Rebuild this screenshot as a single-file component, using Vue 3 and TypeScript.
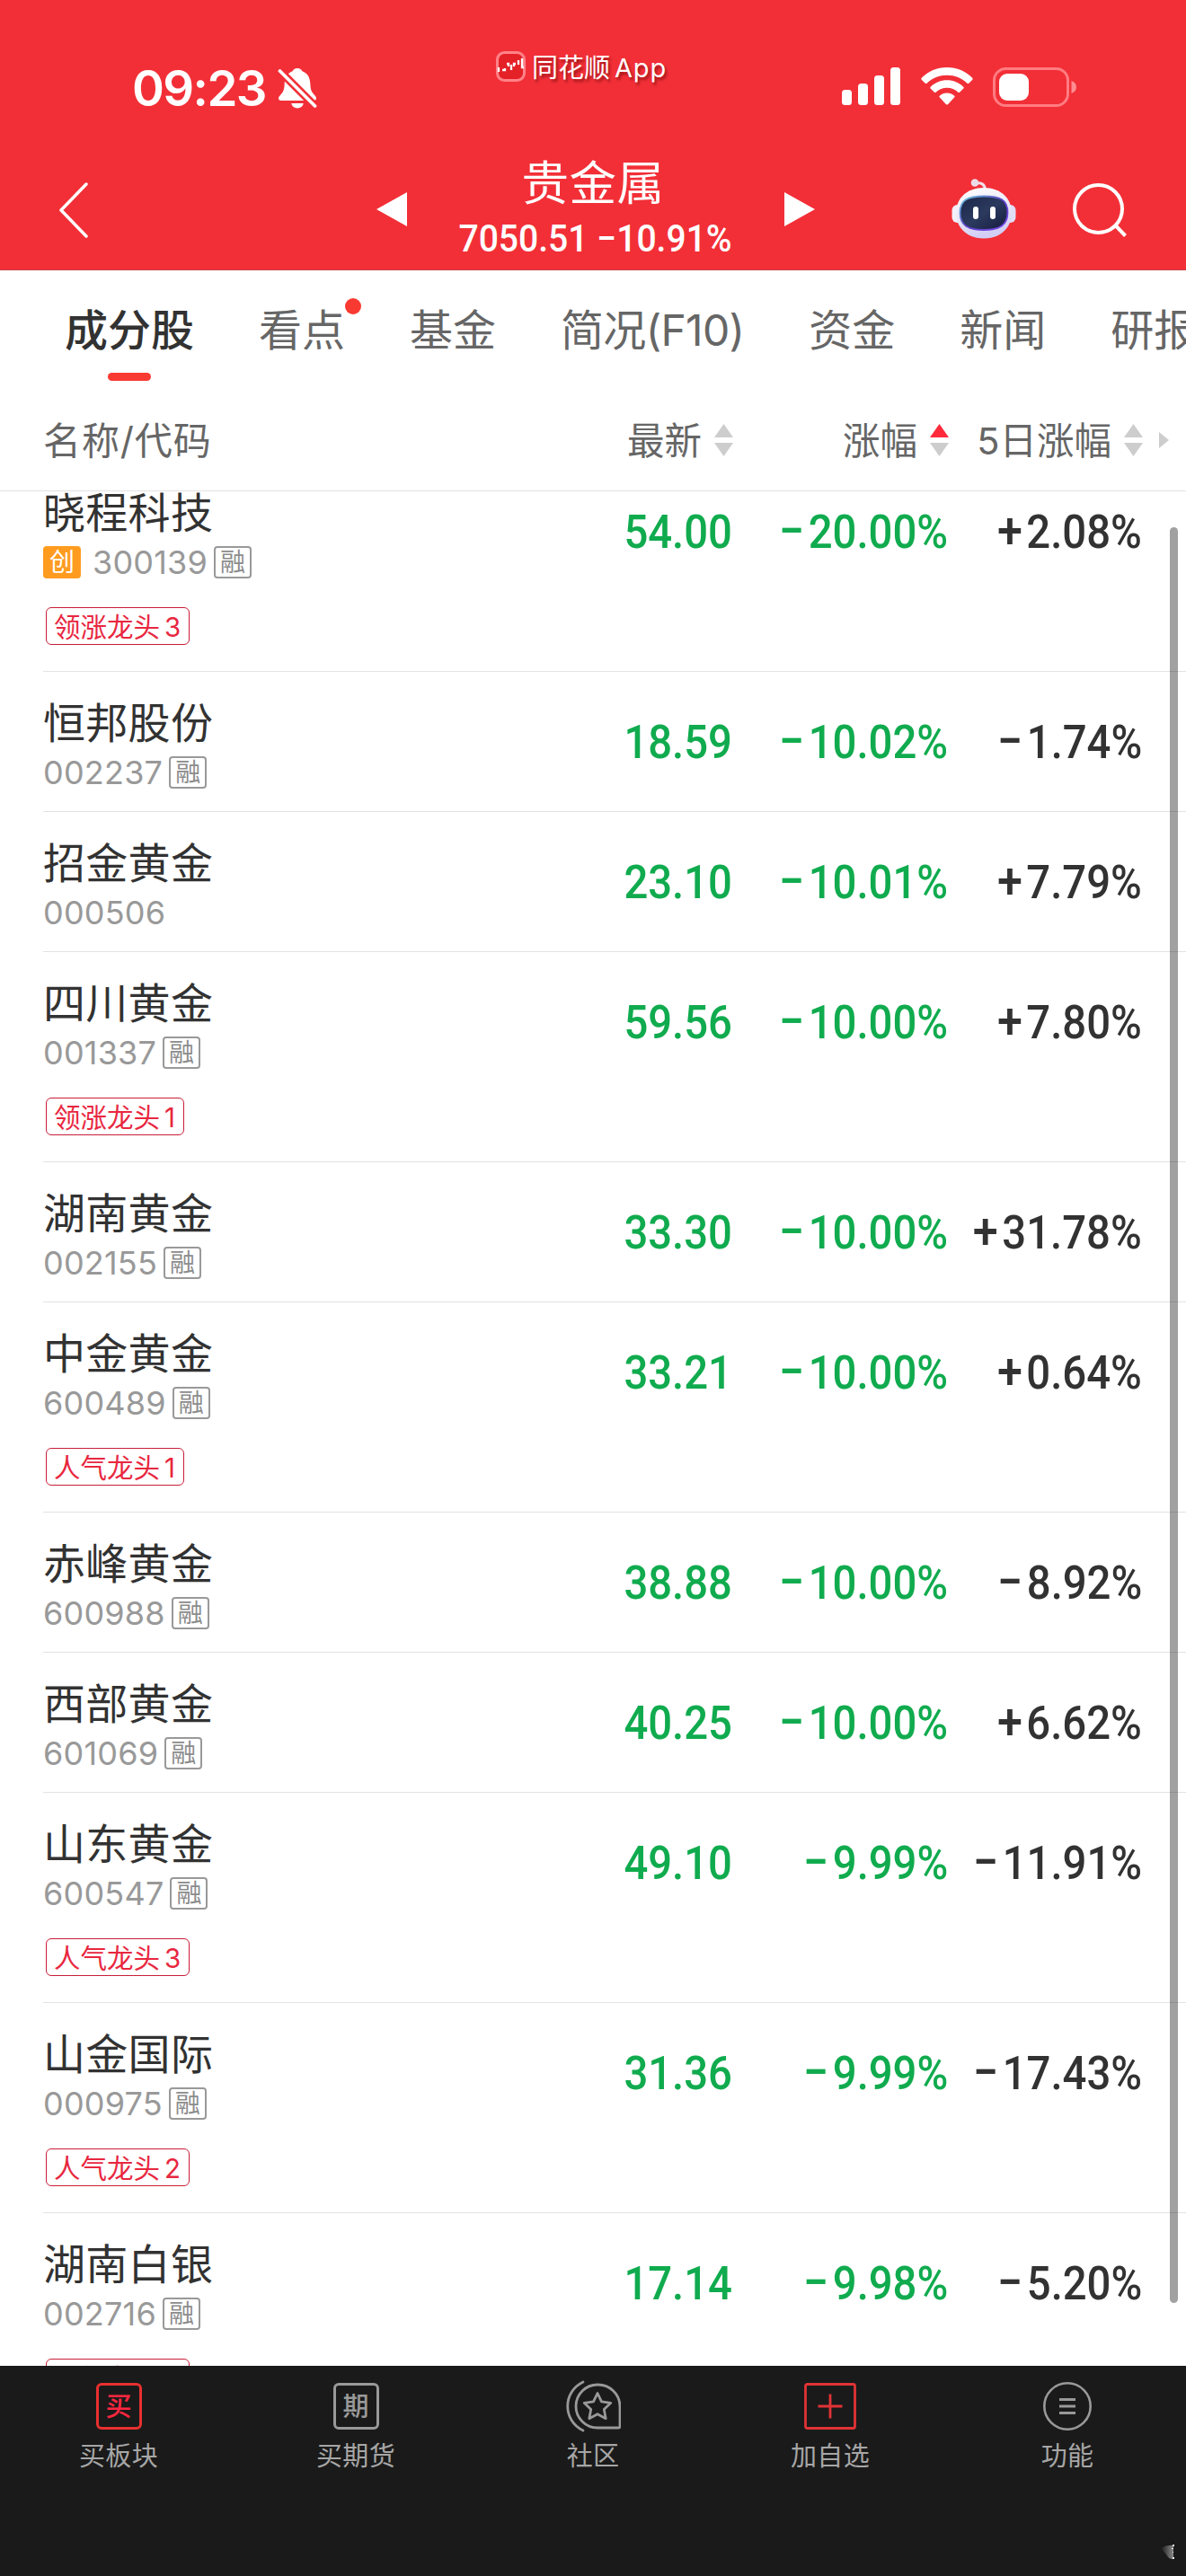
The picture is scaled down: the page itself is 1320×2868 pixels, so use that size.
<script setup lang="ts">
interface Tab {
  label: string
  active?: boolean
  dot?: boolean
  tight?: boolean
}

interface Stock {
  name: string
  code: string
  price: string
  change: string
  fiveDay: string
  margin: boolean
  growth?: boolean
  tag?: string
  rank?: number
}

const tabs: Tab[] = [
  { label: '成分股', active: true },
  { label: '看点', dot: true },
  { label: '基金' },
  { label: '简况(F10)', tight: true },
  { label: '资金' },
  { label: '新闻' },
  { label: '研报' },
]

const columns = [
  { key: 'price', label: '最新', sorted: false },
  { key: 'change', label: '涨幅', sorted: true },
  { key: 'five', label: '5日涨幅', sorted: false },
]

const stocks: Stock[] = [
  { name: '晓程科技', code: '300139', price: '54.00', change: '−20.00%', fiveDay: '+2.08%', margin: true, growth: true, tag: '领涨龙头', rank: 3 },
  { name: '恒邦股份', code: '002237', price: '18.59', change: '−10.02%', fiveDay: '−1.74%', margin: true },
  { name: '招金黄金', code: '000506', price: '23.10', change: '−10.01%', fiveDay: '+7.79%', margin: false },
  { name: '四川黄金', code: '001337', price: '59.56', change: '−10.00%', fiveDay: '+7.80%', margin: true, tag: '领涨龙头', rank: 1 },
  { name: '湖南黄金', code: '002155', price: '33.30', change: '−10.00%', fiveDay: '+31.78%', margin: true },
  { name: '中金黄金', code: '600489', price: '33.21', change: '−10.00%', fiveDay: '+0.64%', margin: true, tag: '人气龙头', rank: 1 },
  { name: '赤峰黄金', code: '600988', price: '38.88', change: '−10.00%', fiveDay: '−8.92%', margin: true },
  { name: '西部黄金', code: '601069', price: '40.25', change: '−10.00%', fiveDay: '+6.62%', margin: true },
  { name: '山东黄金', code: '600547', price: '49.10', change: '−9.99%', fiveDay: '−11.91%', margin: true, tag: '人气龙头', rank: 3 },
  { name: '山金国际', code: '000975', price: '31.36', change: '−9.99%', fiveDay: '−17.43%', margin: true, tag: '人气龙头', rank: 2 },
  { name: '湖南白银', code: '002716', price: '17.14', change: '−9.98%', fiveDay: '−5.20%', margin: true, tag: '人气龙头', rank: 3 },
]

const actions = [
  { icon: 'buy', label: '买板块' },
  { icon: 'futures', label: '买期货' },
  { icon: 'community', label: '社区' },
  { icon: 'add', label: '加自选' },
  { icon: 'menu', label: '功能' },
]
</script>

<template>
  <div class="page">
    <header class="top">
      <div class="status">
        <div class="status-left">
          <span class="time">09:23</span>
          <svg class="bell" width="44" height="46" viewBox="0 0 44 46">
            <path fill="#fff" d="M22 1c3 0 4.600 1.600 5.400 3.300C33.500 6.500 36 11.500 36.300 18c.3 7.500 1.700 9.600 4.400 12.400 2.300 2.400 2.300 3.600 2.300 4.200 0 1.600-1.200 2.400-3 2.400H4c-1.900 0-3-.9-3-2.500 0-1.300.6-2.300 2.400-4.100 2.700-2.800 4-5 4.300-12.400C8 11.500 10.500 6.500 16.600 4.300 17.400 2.600 19 1 22 1z" />
            <path fill="#fff" d="M15.300 40h13.400c-.5 3.300-3.300 5.400-6.700 5.400s-6.200-2.100-6.700-5.400z" />
            <path stroke="#f22f37" stroke-width="9" d="M0 1.500L44 45.500" />
            <path stroke="#fff" stroke-width="3.800" stroke-linecap="round" d="M2.500 4L41.500 43" />
          </svg>
        </div>
        <div class="app-label">
          <svg width="33" height="34" viewBox="0 0 33 34">
            <rect x="1.500" y="1.500" width="30" height="31" rx="8" fill="#e52128" stroke="#ff8288" stroke-width="3" />
            <path fill="none" stroke="#fff" stroke-width="2.300" d="M3 18v5M7 21h3v-2M12 14h2v3M17 15v6M22 14h-2v3M25 10v5M29 8v10h2" />
          </svg>
          <span>同花顺<span class="latin">App</span></span>
        </div>
        <div class="status-right">
          <svg width="66" height="42" viewBox="0 0 66 42" fill="#fff">
            <rect x="0" y="25" width="11" height="17" rx="3.500" />
            <rect x="18" y="18" width="11" height="24" rx="3.500" />
            <rect x="36" y="9" width="11" height="33" rx="3.500" />
            <rect x="54" y="0" width="11" height="42" rx="3.500" />
          </svg>
          <svg width="58" height="42" viewBox="0 0 58 42" fill="#fff">
            <path d="M29 0C40 0 50 4.300 57 11.500c.9.9.9 1.600.1 2.400l-3.600 3.600c-.8.8-1.500.8-2.300 0C45.300 12 37.700 8.700 29 8.700S12.700 12 6.800 17.500c-.8.8-1.500.8-2.300 0L.9 13.900c-.8-.8-.8-1.500.1-2.400C8 4.300 18 0 29 0z" />
            <path d="M29 14.300c7 0 13.400 2.700 18 7.100.9.8.9 1.600.1 2.400l-3.800 3.700c-.8.8-1.400.7-2.200 0-3.200-2.900-7.400-4.700-12.100-4.700s-8.900 1.800-12.100 4.700c-.8.700-1.400.8-2.200 0l-3.800-3.700c-.8-.8-.8-1.600.1-2.400 4.600-4.400 11-7.100 18-7.100z" />
            <path d="M29 28.500c3.100 0 5.900 1.100 8 3 .8.700.8 1.400.1 2.100l-6.900 7.300c-.8.900-1.600.9-2.400 0l-6.900-7.300c-.7-.7-.7-1.400.1-2.100 2.100-1.900 4.900-3 8-3z" />
          </svg>
          <svg width="94" height="44" viewBox="0 0 94 44">
            <rect x="1.500" y="1.500" width="82" height="41" rx="13" fill="none" stroke="#ff7d82" stroke-width="3" />
            <path fill="#ff8d91" d="M87.500 15c3.500 1.200 5.500 4 5.500 7s-2 5.800-5.500 7z" />
            <rect x="7" y="7" width="33" height="30" rx="9" fill="#fff" />
          </svg>
        </div>
      </div>

      <div class="nav">
        <svg class="back" width="34" height="62" viewBox="0 0 34 62">
          <path fill="none" stroke="#fff" stroke-width="3.500" stroke-linecap="round" stroke-linejoin="round" d="M31 2L3 31l28 29" />
        </svg>
        <div class="switcher">
          <svg width="34" height="38" viewBox="0 0 34 38"><path fill="#fff" d="M34 0v38L0 19z" /></svg>
          <div class="heading">
            <h1>贵金属</h1>
            <p><span class="din">7050.51 −10.91%</span></p>
          </div>
          <svg width="34" height="38" viewBox="0 0 34 38"><path fill="#fff" d="M0 0v38l34-19z" /></svg>
        </div>
        <div class="nav-tools">
          <svg class="robot" width="72" height="67" viewBox="0 0 72 67">
            <defs>
              <linearGradient id="shell" x1="0" y1="0" x2="0.300" y2="1">
                <stop offset="0" stop-color="#fff" />
                <stop offset="0.600" stop-color="#e9e6f6" />
                <stop offset="1" stop-color="#d2cef5" />
              </linearGradient>
              <linearGradient id="rim" x1="0" y1="0" x2="1" y2="1">
                <stop offset="0" stop-color="#6fd0dc" />
                <stop offset="0.500" stop-color="#5b3fc4" />
                <stop offset="1" stop-color="#7b4bea" />
              </linearGradient>
              <linearGradient id="visor" x1="0" y1="0" x2="1" y2="1">
                <stop offset="0" stop-color="#1c2648" />
                <stop offset="0.500" stop-color="#2b3a5e" />
                <stop offset="1" stop-color="#151b3e" />
              </linearGradient>
            </defs>
            <path fill="none" stroke="#f1dfe9" stroke-width="3" d="M27 5c6-1 10 1 10.500 7" />
            <circle cx="26" cy="4.500" r="4.300" fill="#ecdce8" />
            <rect x="0.500" y="29" width="12" height="20" rx="6" fill="#f3effb" />
            <rect x="59.500" y="29" width="12" height="20" rx="6" fill="#e2ddf7" />
            <path fill="url(#shell)" d="M36 10c19 0 31 12 31 28S55 66.500 36 66.500 5 54 5 38s12-28 31-28z" />
            <path fill="url(#visor)" stroke="url(#rim)" stroke-width="1.800" d="M36 19.500c18 0 26.500 4 26.500 18S54 57 36 57 9.500 51.500 9.500 37.500s8.500-18 26.500-18z" />
            <rect x="24" y="31" width="6" height="14" rx="3" fill="#fff" />
            <rect x="43" y="31" width="6" height="14" rx="3" fill="#fff" />
          </svg>
          <svg class="search" width="60" height="60" viewBox="0 0 60 60">
            <circle cx="28.500" cy="28.500" r="26.500" fill="none" stroke="#fff" stroke-width="4" />
            <path stroke="#fff" stroke-width="4" d="M47.500 47l11 11.500" />
          </svg>
        </div>
      </div>
    </header>

    <nav class="tabs">
      <div v-for="tab in tabs" :key="tab.label" class="tab" :class="{ active: tab.active, tight: tab.tight }">
        {{ tab.label }}
        <i v-if="tab.dot" class="dot"></i>
      </div>
    </nav>

    <div class="thead">
      <span class="th-name">名称/代码</span>
      <div v-for="col in columns" :key="col.key" class="th" :class="'th-' + col.key">
        <span>{{ col.label }}</span>
        <svg width="21" height="36" viewBox="0 0 21 36">
          <path :fill="col.sorted ? '#ff2a3c' : '#cdcdcd'" d="M10.500 0L21 15H0z" />
          <path fill="#cdcdcd" d="M10.500 36L21 21H0z" />
        </svg>
      </div>
      <svg class="more" width="11" height="18" viewBox="0 0 11 18"><path fill="#cdcdcd" d="M0 0l11 9-11 9z" /></svg>
    </div>

    <main class="list">
      <section v-for="s in stocks" :key="s.code" class="row" :class="{ tall: s.tag }">
        <div class="info">
          <div class="name">{{ s.name }}</div>
          <div class="meta">
            <span v-if="s.growth" class="badge growth">创</span>
            <span class="code">{{ s.code }}</span>
            <span v-if="s.margin" class="badge margin">融</span>
          </div>
          <div v-if="s.tag" class="tag"><span>{{ s.tag }}</span><span class="rank">{{ s.rank }}</span></div>
        </div>
        <div class="cell price"><span class="din">{{ s.price }}</span></div>
        <div class="cell change"><span class="din"><span class="sign">{{ s.change[0] }}</span>{{ s.change.slice(1) }}</span></div>
        <div class="cell five"><span class="din"><span class="sign">{{ s.fiveDay[0] }}</span>{{ s.fiveDay.slice(1) }}</span></div>
      </section>
      <div class="scrollbar"></div>
    </main>

    <footer class="bar">
      <div v-for="a in actions" :key="a.label" class="action">
        <div class="action-icon">
          <span v-if="a.icon === 'buy'" class="glyph buy">买</span>
          <span v-else-if="a.icon === 'futures'" class="glyph">期</span>
          <svg v-else-if="a.icon === 'community'" width="62" height="60" viewBox="0 0 62 60" fill="none" stroke="#999" stroke-width="2.800">
            <path d="M36 6a24 24 0 0 0 0 48h23.500a1.500 1.500 0 0 0 1.500-1.500V30A24.500 24.500 0 0 0 36 6z" />
            <path stroke-linecap="round" d="M20 3C-3 14-3 46 20 57" />
            <path stroke-linejoin="round" d="M36 15.500l4.500 9.400 10.300 1.400-7.500 7.100 1.900 10.300-9.200-5-9.200 5 1.900-10.300-7.500-7.100 10.300-1.400z" />
          </svg>
          <svg v-else-if="a.icon === 'add'" width="58" height="52" viewBox="0 0 58 52" fill="none" stroke="#e03335" stroke-width="2.800">
            <rect x="1.500" y="1.500" width="55" height="49" rx="2" />
            <path d="M15.500 26h27M29 12.500v27" />
          </svg>
          <svg v-else width="54" height="54" viewBox="0 0 54 54" fill="none" stroke="#999" stroke-width="2.600">
            <circle cx="27" cy="27" r="25.700" />
            <path stroke-width="3" d="M18 19.500h18M18 27h18M18 34.500h18" />
          </svg>
        </div>
        <span class="action-label">{{ a.label }}</span>
      </div>
      <svg class="corner" width="20" height="22" viewBox="0 0 20 22">
        <defs>
          <linearGradient id="smudge" x1="0" y1="0" x2="1" y2="0">
            <stop offset="0" stop-color="#1a1a1a" />
            <stop offset="1" stop-color="#8a8a8a" />
          </linearGradient>
        </defs>
        <path fill="url(#smudge)" d="M0 5q7-4 14-3v15q-5 1-8-5z" />
        <path fill="#eee" d="M13 1h2v2h-2zM13 15h2v2h-2zM12 5h2v1h-2zM13 9h1v1h-1z" />
      </svg>
    </footer>
  </div>
</template>

<style>
body {
  margin: 0;
}
</style>

<style scoped>
.page {
  width: 1320px;
  height: 2868px;
  display: flex;
  flex-direction: column;
  overflow: hidden;
  background: #fff;
  color: #323232;
  font-family: Inter, "Noto Sans CJK SC", sans-serif;
}
svg {
  display: block;
  flex: none;
}
.din {
  display: inline-block;
  font-family: Roboto, sans-serif;
  font-weight: 500;
  white-space: nowrap;
}

.top {
  flex: none;
  box-sizing: border-box;
  height: 301px;
  background: #f22f37;
  border-bottom: 1px solid #c4434c;
  color: #fff;
}
.status {
  height: 174px;
  display: grid;
  grid-template-columns: 552px 1fr 383px;
}
.status-left {
  display: flex;
  align-items: flex-start;
  padding: 75px 0 0 147px;
}
.time {
  width: 162px;
  font-size: 54.500px;
  font-weight: 600;
  line-height: 46px;
  letter-spacing: -1.600px;
  white-space: nowrap;
}
.app-label {
  display: flex;
  align-items: flex-start;
  gap: 7px;
  padding-top: 57px;
  font-size: 29px;
  line-height: 38px;
  text-shadow: 2px 3px 3px rgba(90, 0, 0, 0.55);
  white-space: nowrap;
}
.latin {
  margin-left: 5px;
  letter-spacing: 0.800px;
}
.status-right {
  display: flex;
  align-items: flex-start;
  gap: 22px;
  padding-top: 75px;
}
.nav {
  height: 126px;
  display: grid;
  grid-template-columns: 419px 488px 413px;
}
.back {
  margin: 29px 0 0 65px;
}
.switcher {
  display: flex;
  justify-content: space-between;
}
.switcher > svg {
  margin-top: 40px;
}
.heading {
  text-align: center;
}
.heading h1 {
  margin: 0 6px 0 0;
  font-size: 52.500px;
  letter-spacing: 0.500px;
  line-height: 60px;
  font-weight: 400;
}
.heading p {
  margin: 11px 0 0;
  font-size: 42px;
  line-height: 42px;
  display: flex;
  justify-content: center;
}
.heading .din {
  transform: scaleX(0.930);
}
.nav-tools {
  display: flex;
  align-items: flex-start;
}
.robot {
  margin: 25px 0 0 152px;
}
.search {
  margin: 30px 0 0 63px;
}

.tabs {
  flex: none;
  height: 133px;
  display: flex;
  gap: 72px;
  padding-left: 72px;
  overflow: hidden;
}
.tab {
  position: relative;
  flex: none;
  height: 133px;
  font-size: 48px;
  line-height: 134px;
  color: #666;
  white-space: nowrap;
}
.tab.tight {
  letter-spacing: -0.700px;
}
.tab.active {
  color: #323232;
  font-weight: 500;
}
.tab.active::after {
  content: "";
  position: absolute;
  left: 50%;
  top: 114px;
  width: 48px;
  height: 9px;
  margin-left: -24px;
  border-radius: 4.500px;
  background: #f93a32;
}
.dot {
  position: absolute;
  top: 31px;
  right: -18px;
  width: 18px;
  height: 18px;
  border-radius: 50%;
  background: #f93a32;
}

.thead {
  flex: none;
  box-sizing: border-box;
  height: 113px;
  display: grid;
  grid-template-columns: 500px 268px 240px 216px 29px;
  align-items: center;
  padding-left: 48px;
  border-bottom: 1px solid #e2e2e2;
  font-size: 41.500px;
  line-height: 60px;
  color: #666;
}
.th-name {
  padding-top: 1px;
  font-size: 42px;
  letter-spacing: 0.900px;
}
.th {
  display: flex;
  align-items: center;
  justify-content: flex-end;
  gap: 14px;
  white-space: nowrap;
}
.th span {
  padding-top: 1px;
}
.more {
  justify-self: end;
}

.list {
  position: relative;
  flex: none;
  height: 2087px;
  overflow: hidden;
}
.row {
  box-sizing: border-box;
  height: 156px;
  margin-left: 48px;
  display: grid;
  grid-template-columns: 500px 267px 240px 216px;
  border-bottom: 1px solid #e2e2e2;
}
.row.tall {
  height: 234px;
}
.row:first-child {
  margin-top: -33px;
}
.name {
  margin-top: 27px;
  font-size: 47px;
  letter-spacing: 0.300px;
  line-height: 60px;
}
.meta {
  display: flex;
  align-items: center;
  height: 36px;
  margin-top: 7px;
}
.code {
  font-size: 36px;
  line-height: 36px;
  letter-spacing: 0.200px;
  color: #999;
}
.badge {
  box-sizing: border-box;
  width: 42px;
  height: 36px;
  border-radius: 4px;
  font-size: 28px;
  text-align: center;
}
.growth {
  margin-right: 13px;
  background: #ff9c1f;
  color: #fff;
  line-height: 36px;
}
.margin {
  margin-left: 7px;
  border: 2px solid #999;
  color: #8c8c8c;
  line-height: 33px;
}
.tag {
  box-sizing: border-box;
  width: fit-content;
  height: 42px;
  margin: 32px 0 0 3px;
  padding: 0 9px 0 8px;
  display: flex;
  gap: 5px;
  border: 1px solid #c81e38;
  border-radius: 6px;
  color: #e8273f;
  font-size: 29.500px;
  line-height: 42px;
  white-space: nowrap;
}
.cell {
  display: flex;
  justify-content: flex-end;
  padding-top: 47px;
  font-size: 52.500px;
  line-height: 62px;
}
.cell .din {
  transform: scaleX(0.900);
  transform-origin: right center;
}
.sign {
  font-size: 56px;
  line-height: 0;
  letter-spacing: 5px;
}
.price,
.change {
  color: #10ab4e;
}
.scrollbar {
  position: absolute;
  top: 40px;
  left: 1302px;
  width: 9px;
  height: 1977px;
  border-radius: 5px;
  background: rgba(0, 0, 0, 0.370);
}

.bar {
  position: relative;
  flex: none;
  height: 234px;
  display: grid;
  grid-template-columns: repeat(5, 264px);
  background: #1a1a1a;
}
.action {
  display: flex;
  flex-direction: column;
  align-items: center;
}
.action-icon {
  height: 60px;
  margin-top: 15px;
  display: flex;
  align-items: center;
}
.glyph {
  box-sizing: border-box;
  width: 51px;
  height: 52px;
  border: 3px solid #999;
  border-radius: 6px;
  color: #999;
  font-size: 29px;
  font-weight: 500;
  line-height: 47px;
  text-align: center;
}
.glyph.buy {
  border-color: #e8302f;
  color: #ff2740;
}
.action-label {
  margin-top: 6px;
  font-size: 29px;
  letter-spacing: 0.300px;
  line-height: 40px;
  color: #a6a6a6;
}
.corner {
  position: absolute;
  left: 1292px;
  top: 198px;
}
</style>
